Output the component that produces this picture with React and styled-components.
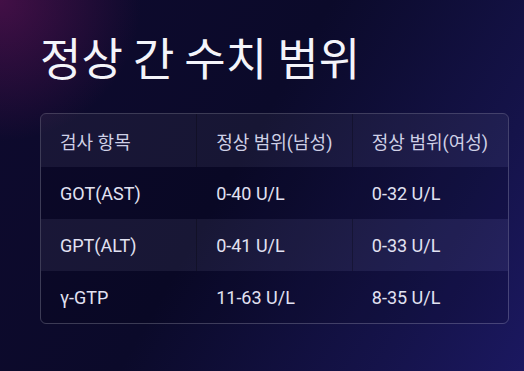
import React from 'react'
import styled, { createGlobalStyle } from 'styled-components'

const GlobalStyle = createGlobalStyle`
    html, body {
        margin: 0;
        padding: 0;
    }
    body {
        font-family: Roboto, "Noto Sans CJK KR", sans-serif;
        background: #0d0a2c;
    }
`;

const rows = [
    { name: 'GOT(AST)', male: '0-40 U/L', female: '0-32 U/L' },
    { name: 'GPT(ALT)', male: '0-41 U/L', female: '0-33 U/L' },
    { name: 'γ-GTP', male: '11-63 U/L', female: '8-35 U/L' },
]

function App() {
    return (
        <PageStyled>
            <GlobalStyle />
            <h1>정상 간 수치 범위</h1>
            <TableWrap>
                <table>
                    <thead>
                        <tr>
                            <th>검사 항목</th>
                            <th>정상 범위(남성)</th>
                            <th>정상 범위(여성)</th>
                        </tr>
                    </thead>
                    <tbody>
                        {rows.map((r, i) => (
                            <Row key={r.name} $striped={i % 2 === 1}>
                                <td>{r.name}</td>
                                <td>{r.male}</td>
                                <td>{r.female}</td>
                            </Row>
                        ))}
                    </tbody>
                </table>
            </TableWrap>
        </PageStyled>
    )
}

const PageStyled = styled.div`
    width: 524px;
    height: 371px;
    box-sizing: border-box;
    padding: 24px 16px 0 40px;
    overflow: hidden;
    background:
        radial-gradient(circle at 0% 0%, rgba(110, 20, 90, 0.55) 0%, rgba(110, 20, 90, 0) 22%),
        linear-gradient(120deg, #0e0a2e 0%, #0b0a2a 45%, #15134a 80%, #1b1860 100%);
    h1{
        margin: 0 0 23px 0;
        font-family: "Noto Sans CJK KR", sans-serif;
        font-size: 45px;
        font-weight: 400;
        line-height: 66px;
        color: #f4f4fa;
        letter-spacing: 0;
    }
`;

const TableWrap = styled.div`
    width: 467px;
    border: 1px solid rgba(255, 255, 255, 0.2);
    border-radius: 6px;
    overflow: hidden;
    table{
        width: 100%;
        border-collapse: collapse;
        table-layout: fixed;
    }
    th, td{
        height: 52px;
        padding: 0 19px;
        text-align: left;
        font-size: 18px;
        font-weight: 400;
        color: #e2e2f2;
        border-right: 1px solid rgba(0, 0, 0, 0.25);
    }
    th:last-child, td:last-child{
        border-right: none;
    }
    th{
        height: 53px;
        color: #cfd0e6;
        background: rgba(255, 255, 255, 0.05);
    }
`;

const Row = styled.tr`
    background: ${p => p.$striped ? 'rgba(255, 255, 255, 0.055)' : 'rgba(0, 0, 0, 0.1)'};
    td{
        border-right-color: ${p => p.$striped ? 'rgba(0, 0, 0, 0.25)' : 'transparent'};
    }
`;

export default App
